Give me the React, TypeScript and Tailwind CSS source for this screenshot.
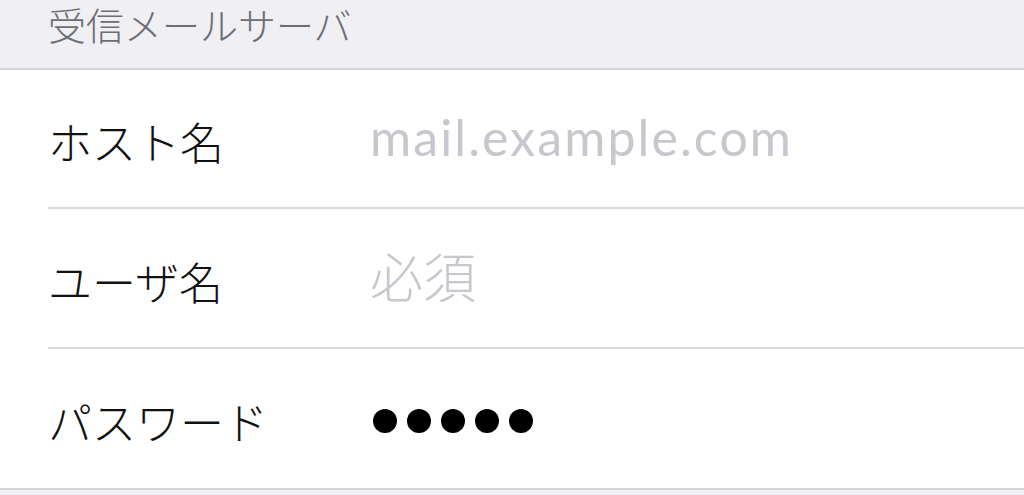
const jp = "font-['Noto_Sans_CJK_JP',sans-serif]"

function Row({ label, children }: { label: string; children: React.ReactNode }) {
  return (
    <div className="flex h-full items-center pl-[48px] pt-[5px]">
      <div className={`w-[322px] shrink-0 text-[44px] leading-none font-light text-[#111] ${jp}`}>{label}</div>
      <div className="flex items-center">{children}</div>
    </div>
  )
}

export default function App() {
  return (
    <div className="h-[495px] w-full overflow-hidden bg-[#efeff4]">
      {/* section header */}
      <div className="h-[70px] border-b-2 border-[#d3d3d8] pl-[48px]">
        <div className={`text-[38px] leading-[48px] font-light text-[#6d6d72] ${jp}`}>受信メールサーバ</div>
      </div>

      <div className="border-b-2 border-[#d3d3d8] bg-white">
        <div className="h-[137px]">
          <Row label="ホスト名">
            <span className="-mt-[8px] font-['Lato',sans-serif] text-[50px] leading-none tracking-[2.1px] text-[#c7c7cd]">mail.example.com</span>
          </Row>
        </div>
        <div className="ml-[48px] h-[2px] bg-[#dadade]" />
        <div className="h-[138px]">
          <Row label="ユーザ名">
            <span className={`-mt-[10px] text-[53px] leading-none font-light text-[#c7c7cd] ${jp}`}>必須</span>
          </Row>
        </div>
        <div className="ml-[48px] h-[2px] bg-[#dadade]" />
        <div className="h-[139px]">
          <Row label="パスワード">
            <div className="flex gap-[10px] pl-[3px]">
              {[0, 1, 2, 3, 4].map((i) => (
                <div key={i} className="h-[24px] w-[24px] rounded-full bg-black" />
              ))}
            </div>
          </Row>
        </div>
      </div>
    </div>
  )
}
